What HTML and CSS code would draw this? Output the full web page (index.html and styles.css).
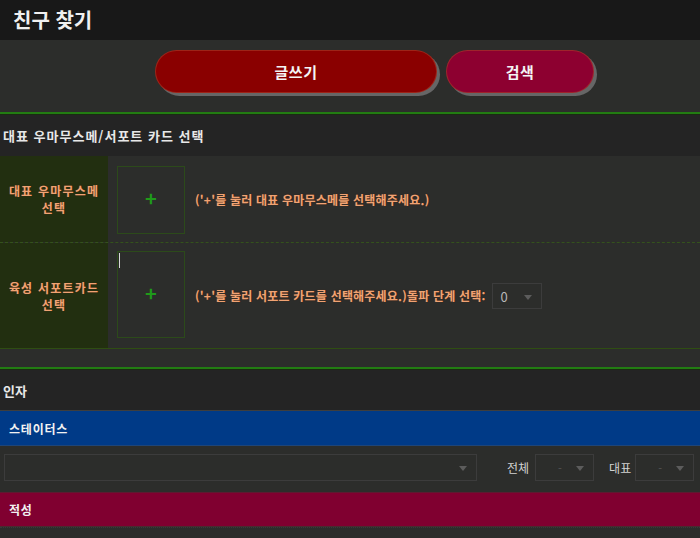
FILE: index.html
```html
<!DOCTYPE html>
<html lang="ko">
<head>
<meta charset="utf-8">
<link rel="stylesheet" href="styles.css">
</head>
<body>
<header class="top">
  <h1 class="title">친구 찾기</h1>
</header>
<div class="btn-row">
  <button class="btn btn-write">글쓰기</button>
  <button class="btn btn-search">검색</button>
</div>
<div class="green-line"></div>
<div class="sec-head sec-pick">대표 우마무스메/서포트 카드 선택</div>
<div class="pick-table">
  <div class="pick-row row1">
    <div class="pick-label">대표 우마무스메<br>선택</div>
    <div class="pick-body">
      <div class="pick-box box1"><span class="plus">+</span></div>
      <span class="hint">('+'를 눌러 대표 우마무스메를 선택해주세요.)</span>
    </div>
  </div>
  <div class="pick-row row2">
    <div class="pick-label">육성 서포트카드<br>선택</div>
    <div class="pick-body">
      <div class="pick-box box2"><span class="caret"></span><span class="plus">+</span></div>
      <span class="hint">('+'를 눌러 서포트 카드를 선택해주세요.)돌파 단계 선택:</span>
      <div class="sel sel-lb"><span class="sel-val">0</span><span class="tri"></span></div>
    </div>
  </div>
</div>
<div class="gap"></div>
<div class="green-line"></div>
<div class="sec-head sec-inja">인자</div>
<div class="bar bar-blue">스테이터스</div>
<div class="filter-row">
  <div class="sel sel-wide"><span class="tri"></span></div>
  <span class="flabel fl-all">전체</span>
  <div class="sel sel-sm"><span class="dash">-</span><span class="tri"></span></div>
  <span class="flabel fl-rep">대표</span>
  <div class="sel sel-sm"><span class="dash">-</span><span class="tri"></span></div>
</div>
<div class="bar bar-red">적성</div>
<div class="rest"></div>
</body>
</html>
```

FILE: styles.css
```css
* { box-sizing: border-box; }
html, body {
  margin: 0;
  padding: 0;
  background: #2c2d2b;
  font-family: "Noto Sans CJK KR", "Noto Sans", sans-serif;
  color: #e6e6e6;
  overflow: hidden;
}
.top {
  height: 40px;
  background: #181818;
  display: flex;
  align-items: center;
  padding-left: 13px;
}
.title {
  margin: 0;
  font-size: 20px;
  font-weight: 700;
  color: #f0f0f0;
  line-height: 1;
  padding-bottom: 1px;
}
.btn-row {
  height: 72px;
  background: #2c2d2b;
  display: flex;
  align-items: flex-start;
  padding-left: 155px;
  padding-top: 10px;
  gap: 9px;
}
.btn {
  height: 43px;
  border-radius: 22px;
  border: 1px solid rgba(170, 60, 40, 0.6);
  color: #f4f4f4;
  font-family: inherit;
  font-size: 15px;
  font-weight: 700;
  letter-spacing: 0.5px;
  box-shadow: 3px 3px 0 #666666;
  padding: 0;
}
.btn-write { width: 282px; background: #8a0000; }
.btn-search { width: 148px; background: #8d0030; }
.green-line {
  height: 3px;
  background: #227c12;
  border-bottom: 1px solid #1a2a12;
}
.sec-head {
  height: 41px;
  background: #242424;
  display: flex;
  align-items: center;
  padding-left: 3px;
  font-size: 13px;
  font-weight: 700;
  color: #e8e8e8;
}
.sec-pick { letter-spacing: 1px; }
.pick-table {
  border-bottom: 1px solid #2f4d12;
}
.pick-row {
  display: flex;
}
.row1 { height: 87px; border-bottom: 1px dashed #34521c; }
.row2 { height: 105px; }
.pick-label {
  width: 108px;
  background: #222f10;
  display: flex;
  align-items: center;
  justify-content: center;
  text-align: center;
  font-size: 12px;
  font-weight: 700;
  line-height: 17px;
  letter-spacing: 1.2px;
  color: #f0a374;
  text-shadow: 0 0 1px #5a2a10;
}
.pick-body {
  flex: 1;
  display: flex;
  align-items: center;
  padding-left: 9px;
}
.pick-box {
  position: relative;
  width: 68px;
  border: 1px solid #2c4a1a;
  display: flex;
  align-items: center;
  justify-content: center;
  margin-right: 10px;
}
.box1 { height: 68px; margin-top: 1px; }
.box2 { height: 87px; margin-top: -2px; }
.plus {
  color: #1f9a1a;
  font-size: 20px;
  font-weight: 700;
  line-height: 1;
  margin-top: -3px;
}
.caret {
  position: absolute;
  left: 1px;
  top: 1px;
  width: 1px;
  height: 15px;
  background: #d8d8d8;
}
.hint {
  font-size: 12px;
  font-weight: 700;
  letter-spacing: 0.2px;
  color: #f0a374;
  text-shadow: 0 0 1px #5a2a10;
  white-space: nowrap;
}
.sel {
  position: relative;
  height: 27px;
  border: 1px solid #3c3c3c;
  background: #2c2d2b;
  display: flex;
  align-items: center;
}
.sel-lb {
  width: 50px;
  height: 26px;
  margin-left: 6px;
  margin-top: 1px;
}
.sel-val {
  font-size: 13px;
  color: #b8b8b8;
  margin-left: 8px;
}
.tri {
  position: absolute;
  right: 9px;
  top: 11px;
  width: 0;
  height: 0;
  border-left: 4px solid transparent;
  border-right: 4px solid transparent;
  border-top: 5px solid #5c5c5c;
}
.gap { height: 18px; }
.sec-inja {
  border-bottom: 1px solid #3e3e3e;
}
.bar {
  height: 35px;
  display: flex;
  align-items: center;
  padding-left: 9px;
  font-size: 12px;
  font-weight: 700;
  letter-spacing: 0.8px;
  color: #f2f2f2;
}
.bar-blue {
  background: #003a87;
  border-bottom: 1px solid #1f4578;
}
.bar-red {
  background: #800030;
  border-top: 1px solid #5e1a30;
  border-bottom: 1px solid #4a2a30;
}
.filter-row {
  height: 46px;
  display: flex;
  align-items: center;
  padding-left: 4px;
  padding-bottom: 3px;
}
.sel-wide { width: 473px; }
.sel-sm { width: 59px; flex-shrink: 0; }
.dash {
  font-size: 11px;
  color: #555;
  margin-left: 22px;
}
.flabel {
  font-size: 12px;
  color: #d2d2d2;
  white-space: nowrap;
}
.fl-all { margin-left: 30px; margin-right: 6px; }
.fl-rep { margin-left: 15px; margin-right: 4px; }
.rest { height: 20px; border-top: 1px dotted #3a3a3a; }
```
